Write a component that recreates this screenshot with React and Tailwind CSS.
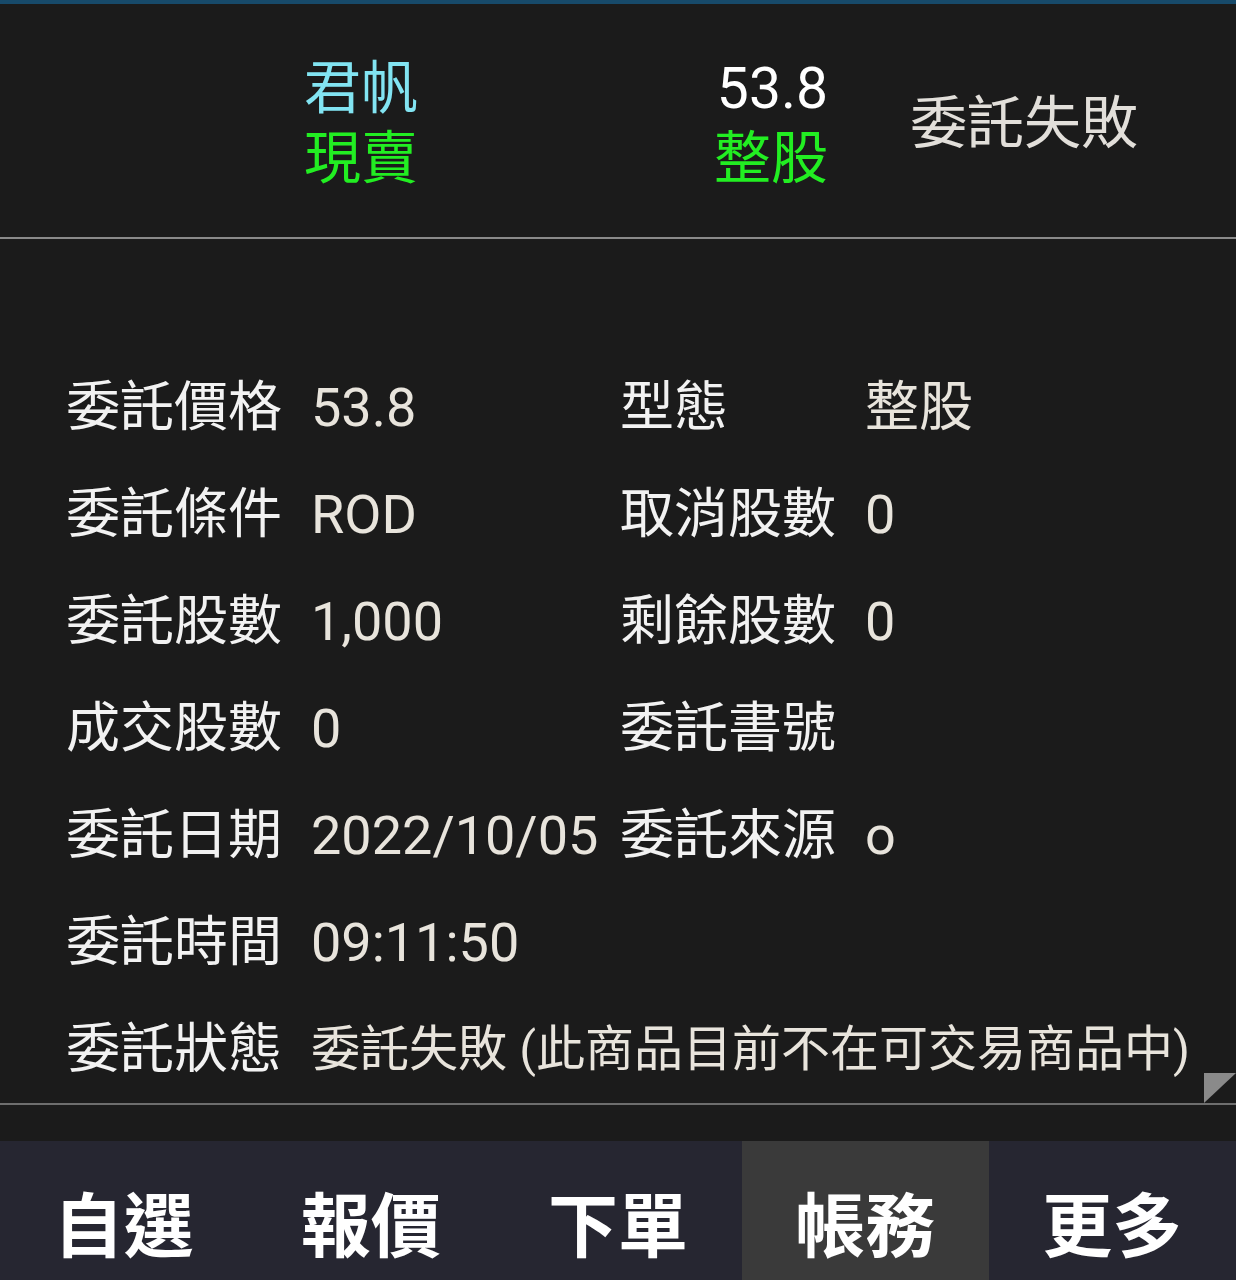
import React from 'react';

const font = { fontFamily: 'Roboto, "Noto Sans CJK TC", "Noto Sans", sans-serif' };

function Row({ label, value, rightLabel, rightValue, small }) {
  return (
    <div className="flex h-[107px] items-center pl-[66px]">
      <div className={`flex items-center ${small ? '' : 'w-[554px]'}`}>
        <span className="w-[245px] shrink-0 text-[54px] leading-none text-[#f2f2f2]">{label}</span>
        <span className={`${small ? 'text-[49px] whitespace-nowrap' : 'text-[54px]'} leading-none text-[#e8e4dc]`}>{value}</span>
      </div>
      {rightLabel && (
        <div className="flex items-center">
          <span className="w-[245px] shrink-0 text-[54px] leading-none text-[#f2f2f2]">{rightLabel}</span>
          <span className="text-[54px] leading-none text-[#e8e4dc]">{rightValue}</span>
        </div>
      )}
    </div>
  );
}

export default function App() {
  const rows = [
    { label: '委託價格', value: '53.8', rightLabel: '型態', rightValue: '整股' },
    { label: '委託條件', value: 'ROD', rightLabel: '取消股數', rightValue: '0' },
    { label: '委託股數', value: '1,000', rightLabel: '剩餘股數', rightValue: '0' },
    { label: '成交股數', value: '0', rightLabel: '委託書號', rightValue: '' },
    { label: '委託日期', value: '2022/10/05', rightLabel: '委託來源', rightValue: 'o' },
    { label: '委託時間', value: '09:11:50' },
  ];
  const tabs = ['自選', '報價', '下單', '帳務', '更多'];

  return (
    <div className="h-[1280px] w-[1236px] overflow-hidden bg-[#1b1b1b]" style={font}>
      {/* top strip + header */}
      <div className="h-[4px] bg-[#174a6a]"></div>
      <div className="flex h-[233px] items-center pt-[6px]">
        <div className="flex w-[440px] flex-col pl-[304px] text-[57px] leading-[70px]">
          <span className="text-[#82e4f2]">君帆</span>
          <span className="text-[#22ee22]">現賣</span>
        </div>
        <div className="flex w-[388px] flex-col items-end text-[57px] leading-[70px]">
          <span className="text-white">53.8</span>
          <span className="text-[#22ee22]">整股</span>
        </div>
        <span className="ml-[82px] text-[57px] leading-none text-[#e2dfda]">委託失敗</span>
      </div>
      <div className="h-[2px] bg-[#8a8a8a]"></div>

      {/* detail rows */}
      <div className="relative pt-[115px]">
        {rows.map((r) => (
          <Row key={r.label} {...r} />
        ))}
        <Row label="委託狀態" value="委託失敗 (此商品目前不在可交易商品中)" small />
        <svg className="absolute bottom-0 right-0" width="32" height="30" viewBox="0 0 32 30">
          <polygon points="0,0 32,0 0,30" fill="#8a8a8a" />
        </svg>
      </div>
      <div className="h-[2px] bg-[#6e6e6e]"></div>

      {/* bottom nav */}
      <div className="mt-[36px] flex h-[150px] bg-[#262631]">
        {tabs.map((t) => (
          <div
            key={t}
            className={`flex w-[247.2px] justify-center pt-[52px] text-[70px] font-bold leading-none text-white ${t === '帳務' ? 'bg-[#3a3a3a]' : ''}`}
          >
            {t}
          </div>
        ))}
      </div>
    </div>
  );
}
